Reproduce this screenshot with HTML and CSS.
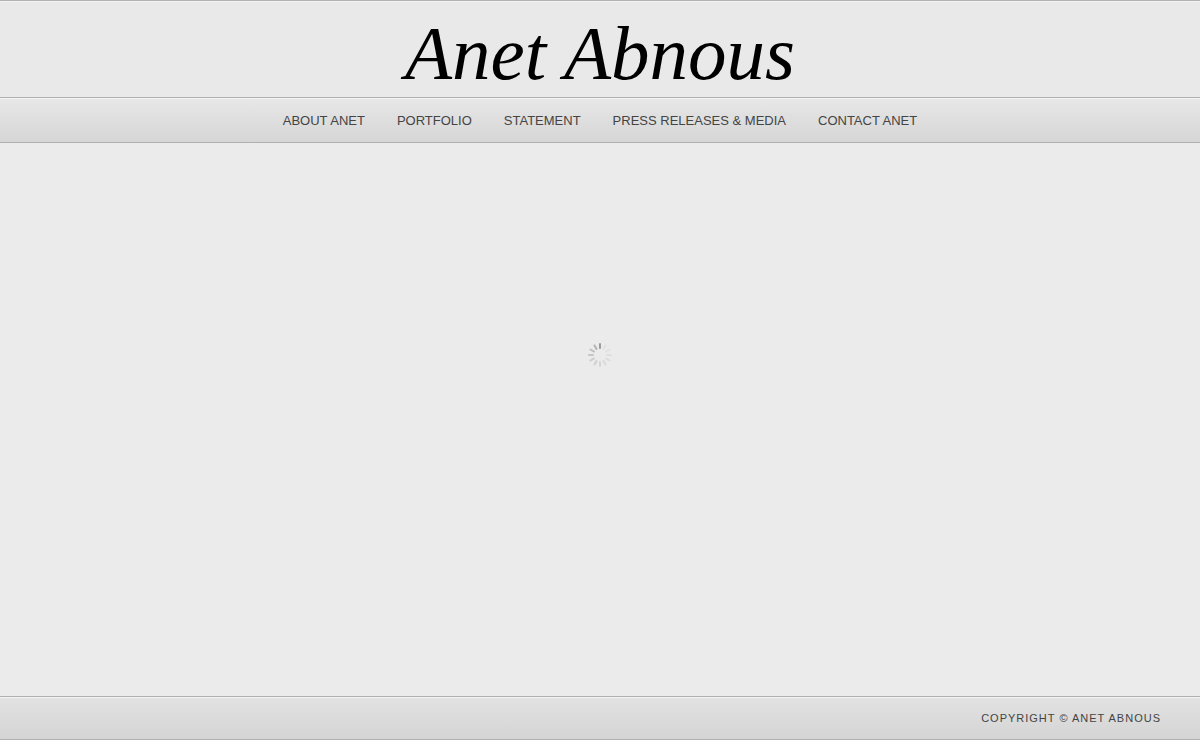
FILE: index.html
```html
<!DOCTYPE html>
<html lang="en">
<head>
<meta charset="utf-8">
<meta name="viewport" content="width=device-width, initial-scale=1">
<title>Anet Abnous</title>
<link rel="stylesheet" href="styles.css">
</head>
<body class="page">
<header class="masthead">
  <h1 class="brand"><a class="brand-link" href="#">Anet Abnous</a></h1>
</header>
<nav class="bar nav" aria-label="Main">
  <a class="nav-link" href="#about">ABOUT ANET</a>
  <a class="nav-link" href="#portfolio">PORTFOLIO</a>
  <a class="nav-link" href="#statement">STATEMENT</a>
  <a class="nav-link" href="#press">PRESS RELEASES &amp; MEDIA</a>
  <a class="nav-link" href="#contact">CONTACT ANET</a>
</nav>
<main class="stage">
  <svg class="spinner" viewBox="-12 -12 24 24" role="img" aria-label="Loading">
    <g stroke="#888" stroke-width="2" stroke-linecap="round">
      <path d="M0-7V-11" opacity=".8"/>
      <path d="M0-7V-11" opacity=".08" transform="rotate(30)"/>
      <path d="M0-7V-11" opacity=".1" transform="rotate(60)"/>
      <path d="M0-7V-11" opacity=".12" transform="rotate(90)"/>
      <path d="M0-7V-11" opacity=".14" transform="rotate(120)"/>
      <path d="M0-7V-11" opacity=".17" transform="rotate(150)"/>
      <path d="M0-7V-11" opacity=".21" transform="rotate(180)"/>
      <path d="M0-7V-11" opacity=".26" transform="rotate(210)"/>
      <path d="M0-7V-11" opacity=".31" transform="rotate(240)"/>
      <path d="M0-7V-11" opacity=".38" transform="rotate(270)"/>
      <path d="M0-7V-11" opacity=".46" transform="rotate(300)"/>
      <path d="M0-7V-11" opacity=".56" transform="rotate(330)"/>
    </g>
  </svg>
</main>
<footer class="bar footer">
  <p class="copyright">COPYRIGHT © ANET ABNOUS</p>
</footer>
</body>
</html>
```
FILE: styles.css
```css
* {
  box-sizing: border-box;
}

.page {
  display: flex;
  flex-direction: column;
  min-height: 100vh;
  margin: 0;
  background: #ebebeb;
  color: #444;
  font-family: "Liberation Sans", Arial, sans-serif;
}

.masthead {
  display: flex;
  justify-content: center;
  padding: 8px 16px 0;
  border-top: 1px solid #b3b3b3;
  box-shadow: inset 0 1px #f4f4f4;
  background: #e9e9e9;
}

.brand {
  margin: 0;
  font-family: "Liberation Serif", "Times New Roman", serif;
  font-size: 77px;
  font-style: italic;
  font-weight: 400;
  line-height: 88px;
}

.brand-link {
  color: #000;
  text-decoration: none;
}

.bar {
  display: flex;
  align-items: center;
  border-top: 1px solid #b0b0b0;
  border-bottom: 1px solid #b0b0b0;
  box-shadow: inset 0 1px #f4f4f4;
  background: linear-gradient(#e7e7e7, #d6d6d6);
}

.nav {
  flex-wrap: wrap;
  justify-content: center;
  gap: 0 32px;
  padding: 15px 16px 13px;
}

.nav-link {
  color: #444;
  font-size: 13px;
  line-height: 16px;
  text-decoration: none;
}

.nav-link:hover {
  color: #000;
}

.stage {
  display: flex;
  flex: 1;
  justify-content: center;
  padding-top: 200px;
}

.spinner {
  width: 24px;
  height: 24px;
}

.footer {
  justify-content: flex-end;
  padding: 13px 39px;
  background: linear-gradient(#e2e2e2, #d5d5d5);
}

.copyright {
  margin: 0;
  font-size: 11px;
  letter-spacing: 1px;
  line-height: 16px;
}
```
